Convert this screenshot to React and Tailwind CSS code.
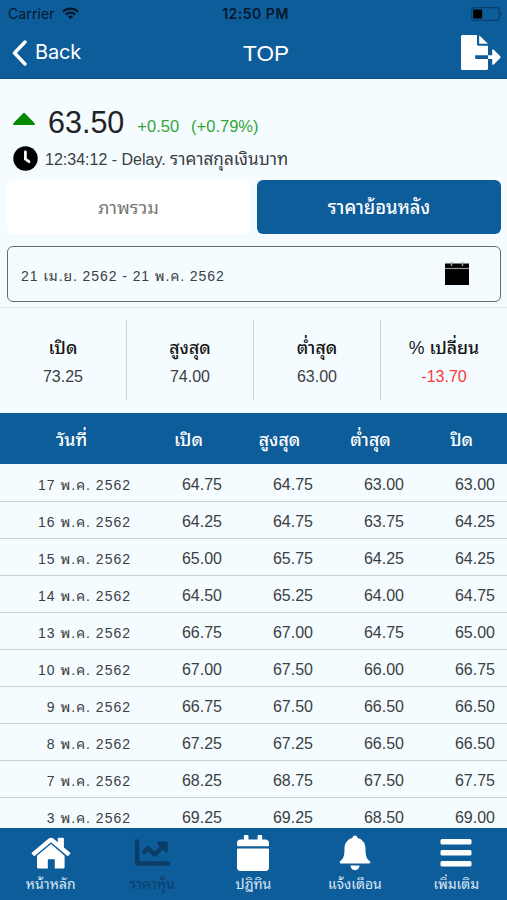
import { FaCalendar, FaChartLine } from 'react-icons/fa';

const summary = [
  { label: 'เปิด', value: '73.25' },
  { label: 'สูงสุด', value: '74.00' },
  { label: 'ต่ำสุด', value: '63.00' },
  { label: '% เปลี่ยน', value: '-13.70', down: true },
];

const rows = [
  ['17 พ.ค. 2562', '64.75', '64.75', '63.00', '63.00'],
  ['16 พ.ค. 2562', '64.25', '64.75', '63.75', '64.25'],
  ['15 พ.ค. 2562', '65.00', '65.75', '64.25', '64.25'],
  ['14 พ.ค. 2562', '64.50', '65.25', '64.00', '64.75'],
  ['13 พ.ค. 2562', '66.75', '67.00', '64.75', '65.00'],
  ['10 พ.ค. 2562', '67.00', '67.50', '66.00', '66.75'],
  ['9 พ.ค. 2562', '66.75', '67.50', '66.50', '66.50'],
  ['8 พ.ค. 2562', '67.25', '67.25', '66.50', '66.50'],
  ['7 พ.ค. 2562', '68.25', '68.75', '67.50', '67.75'],
  ['3 พ.ค. 2562', '69.25', '69.25', '68.50', '69.00'],
];

function WifiIcon() {
  return (
    <svg width="17" height="13" viewBox="0 0 17 13" fill="none" stroke="#03182b" strokeWidth="2.3">
      <path d="M1 4.7a10.6 10.6 0 0 1 15 0" />
      <path d="M3.8 7.6a6.6 6.6 0 0 1 9.4 0" />
      <path d="M8.5 12.3 6 9.8a3.5 3.5 0 0 1 5 0z" fill="#03182b" stroke="none" />
    </svg>
  );
}

function BatteryIcon() {
  return (
    <svg width="32" height="14" viewBox="0 0 32 14">
      <rect x="0.7" y="0.7" width="27.6" height="12.6" rx="2.8" fill="none" stroke="#083f6f" strokeWidth="1.2" />
      <rect x="2.2" y="2.4" width="9" height="9.2" rx="1" fill="#000" />
      <path d="M29.6 4.8c1.8.7 1.8 3.7 0 4.4z" fill="#083f6f" />
    </svg>
  );
}

function ExportIcon() {
  return (
    <svg width="40" height="36" viewBox="0 0 40 36" fill="#fff">
      <path d="M1.5 0H16v9.2c0 .9.6 1.5 1.5 1.5H27v9.5H14.2v3.9H27v9.4c0 .9-.6 1.5-1.5 1.5h-24C.6 35 0 34.4 0 33.5v-32C0 .6.6 0 1.5 0z" />
      <path d="M18.2.3 27 8.7h-8.800z" />
      <path d="M27 20.2h4.2v-4.700c0-.9 1-1.300 1.600-.7l6.400 6.500c.5.500.5 1.200 0 1.700l-6.400 6.500c-.6.600-1.600.2-1.600-.7v-4.700H27z" />
    </svg>
  );
}

function ClockIcon() {
  return (
    <svg width="25" height="25" viewBox="0 0 25 25">
      <circle cx="12.5" cy="12.5" r="12.2" fill="#000" />
      <path d="M12.4 6v7l3.600 2.700" fill="none" stroke="#f5fcff" strokeWidth="2.8" strokeLinecap="round" />
    </svg>
  );
}

function HomeIcon() {
  return (
    <svg width="40" height="32" viewBox="0 0 40 32" fill="#fff">
      <path d="M6 18.800 20 7l13.600 11.800v11.200c0 .9-.6 1.500-1.500 1.500h-8.300v-9.300h-7v9.300H7.500c-.9 0-1.500-.6-1.500-1.500z" />
      <path d="M17.700 1.500c1.300-1.100 3.300-1.100 4.600 0l4.500 3.800V1.800c0-.6.400-1 1-1h4.100c.6 0 1 .4 1 1v8.700l6.100 5.100c.5.400.5 1 .1 1.400l-1.500 1.600c-.4.500-1 .5-1.500.1L20 5.200 3.900 18.700c-.5.400-1.100.4-1.500-.1L.9 17c-.4-.4-.4-1 .1-1.400z" />
    </svg>
  );
}

function BellIcon() {
  return (
    <svg width="32" height="36" viewBox="0 0 32 36" fill="#fff">
      <path d="M16 .5c1.500 0 2.500 1.100 2.500 2.600 4.900 1.200 8 5 8 10.500 0 7.500 1 10.500 4.400 12.700.8.500.4 2.200-.8 2.200H1.900c-1.200 0-1.600-1.700-.8-2.200 3.400-2.200 4.400-5.200 4.400-12.700 0-5.500 3.100-9.300 8-10.500 0-1.500 1-2.600 2.500-2.600z" />
      <path d="M11.500 30.500h9c0 2.600-2 4.700-4.500 4.700s-4.500-2.100-4.500-4.700z" />
    </svg>
  );
}

function BarsIcon() {
  return (
    <svg width="32" height="30" viewBox="0 0 32 30" fill="#fff">
      <rect x="0.5" y="1" width="31" height="5.5" rx="1.5" />
      <rect x="0.5" y="12" width="31" height="5.5" rx="1.5" />
      <rect x="0.5" y="23" width="31" height="5.5" rx="1.5" />
    </svg>
  );
}

const tabs = [
  { label: 'หน้าหลัก', icon: <HomeIcon /> },
  { label: 'ราคาหุ้น', icon: <FaChartLine size={35} />, active: true },
  { label: 'ปฏิทิน', icon: <FaCalendar className="w-[32px] h-[36px]" preserveAspectRatio="none" /> },
  { label: 'แจ้งเตือน', icon: <BellIcon /> },
  { label: 'เพิ่มเติม', icon: <BarsIcon /> },
];

export default function App() {
  return (
    <div className="w-[507px] h-[900px] flex flex-col overflow-hidden bg-[#f5fcff] text-[#3c4043] font-['Liberation_Sans','Noto_Sans_Thai_Looped','Thonburi','Loma','Garuda','Waree','FreeSerif',sans-serif]">

      {/* Status bar and title */}
      <header className="h-[79px] shrink-0 bg-[#0e5d9b] border-b border-[#0b4f86] font-['Inter','Liberation_Sans',sans-serif]">
        <div className="h-[27px] grid grid-cols-3 items-center pl-2 pr-1 text-[#03182b]">
          <div className="flex items-center gap-[7px] text-[14px] leading-none tracking-[0.1px]">
            Carrier
            <WifiIcon />
          </div>
          <div className="text-center text-[14px] font-semibold leading-none tracking-[0.5px]">12:50 PM</div>
          <div className="flex justify-end"><BatteryIcon /></div>
        </div>
        <div className="h-[51px] grid grid-cols-3 items-center pl-3 pr-1.5 text-white">
          <div className="flex items-center gap-[8px] text-[20px] leading-none tracking-[-0.2px]">
            <svg width="15" height="26" viewBox="0 0 15 26" fill="none" stroke="#fff" strokeWidth="3.4" strokeLinecap="round" strokeLinejoin="round">
              <path d="M13 2 2.500 13 13 24" />
            </svg>
            <span className="-mt-0.5">Back</span>
          </div>
          <h1 className="pl-[19px] pt-1 text-center text-[22.5px] leading-none font-['Liberation_Sans',sans-serif]">TOP</h1>
          <div className="flex justify-end"><ExportIcon /></div>
        </div>
      </header>

      {/* Price */}
      <section className="h-[101px] shrink-0 pl-[13px] pt-[24px]">
        <div className="h-[38px] flex">
          <svg width="22" height="12" viewBox="0 0 22 12" className="mt-[10px]">
            <path d="M9.900.5c.7-.6 1.500-.6 2.200 0l9.300 9.500c.8.900.4 2-.8 2H1.400C.2 12-.2 10.900.6 10z" fill="#008a00" />
          </svg>
          <span className="ml-[13px] text-[30.5px] leading-[38px] text-[#222]">63.50</span>
          <span className="ml-[13px] text-[16.5px] leading-[46px] text-[#34a53a]">+0.50</span>
          <span className="ml-[12px] text-[16.5px] leading-[46px] text-[#34a53a]">(+0.79%)</span>
        </div>
        <div className="h-[34px] flex items-center gap-[7px]">
          <ClockIcon />
          <span className="pt-1 text-[16px] leading-none whitespace-nowrap">12:34:12 - Delay. <span className="text-[17.2px]">ราคาสกุลเงินบาท</span></span>
        </div>
      </section>

      {/* Segment */}
      <div className="h-[54px] shrink-0 flex gap-[7px] pl-[7px] pr-[6px] text-[18.3px]">
        <button className="w-[243px] pt-0.5 rounded-md bg-white text-[#777]">ภาพรวม</button>
        <button className="flex-1 pt-0.5 rounded-md bg-[#0e5d9b] text-white font-medium">ราคาย้อนหลัง</button>
      </div>

      {/* Date range */}
      <div className="h-[74px] shrink-0 pt-[12px] pl-[7px] pr-[6px] border-b border-[#dfe5e8]">
        <div className="h-[56px] flex items-center justify-between rounded-md border border-[#666b70] pl-[13px] pr-[31px]">
          <span className="pt-1 text-[14px] tracking-[0.92px]">21 เม.ย. 2562 - 21 พ.ค. 2562</span>
          <svg width="24" height="23" viewBox="0 0 24 23" className="-mt-0.5">
            <path d="M0 1.500h24V23H0z" fill="#000" />
            <path d="M0 6.500h24" stroke="#999" strokeWidth="1.2" />
            <path d="M6.500 0v4M17.500 0v4" stroke="#999" strokeWidth="1.5" />
          </svg>
        </div>
      </div>

      {/* Summary */}
      <section className="h-[105px] shrink-0 grid grid-cols-[127px_127px_127px_126px] pt-[12px] pb-[13px]">
        {summary.map((item) => (
          <div key={item.label} className="flex flex-col items-center pt-[14px] border-r border-[#cfd5d8] last:border-r-0">
            <div className="h-[28px] text-[17.7px] leading-[28px] font-medium text-[#151515] whitespace-nowrap">{item.label}</div>
            <div className={item.down ? 'text-[16px] leading-[30px] text-[#f5393d]' : 'text-[16px] leading-[30px]'}>{item.value}</div>
          </div>
        ))}
      </section>

      {/* History */}
      <section className="flex-1 min-h-0 overflow-hidden">
        <div className="h-[51px] mb-px grid grid-cols-[143px_91px_91px_91px_91px] items-center bg-[#0e5d9b] pt-1 text-center text-[17.7px] font-medium text-white">
          <div>วันที่</div>
          <div>เปิด</div>
          <div>สูงสุด</div>
          <div>ต่ำสุด</div>
          <div>ปิด</div>
        </div>
        {rows.map((row) => (
          <div key={row[0]} className="h-[37px] grid grid-cols-[131px_91px_91px_91px_91px] items-center border-b border-[#c9d0d3] pt-1 text-right text-[16px]">
            <div className="text-[14px] tracking-[1px]">{row[0]}</div>
            <div>{row[1]}</div>
            <div>{row[2]}</div>
            <div>{row[3]}</div>
            <div>{row[4]}</div>
          </div>
        ))}
      </section>

      {/* Tab bar */}
      <nav className="h-[72px] shrink-0 grid grid-cols-5 bg-[#0e5d9b]">
        {tabs.map((tab) => (
          <div key={tab.label} className={tab.active ? 'flex flex-col items-center pt-[6px] text-[#0a3e68]' : 'flex flex-col items-center pt-[6px] text-white'}>
            <div className="h-[37px] flex items-center">{tab.icon}</div>
            <span className={tab.active ? 'text-[14px] leading-[26px] whitespace-nowrap' : 'text-[14px] leading-[26px] whitespace-nowrap text-[#dbe8f3]'}>{tab.label}</span>
          </div>
        ))}
      </nav>
    </div>
  );
}
